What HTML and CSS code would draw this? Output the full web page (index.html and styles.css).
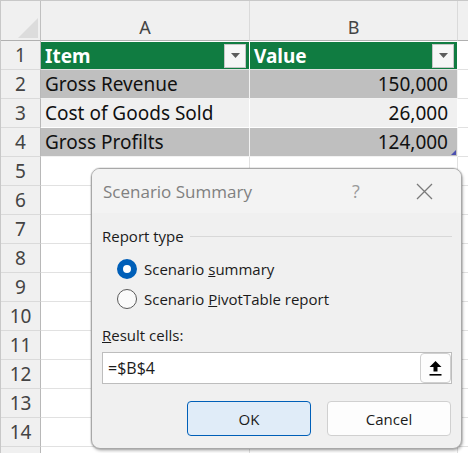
FILE: index.html
```html
<!DOCTYPE html>
<html>
<head>
<meta charset="utf-8">
<link rel="stylesheet" href="styles.css">
</head>
<body>
<div class="sheet">
  <div class="corner"><span class="tri"></span></div>
  <div class="colhead">A</div>
  <div class="colhead">B</div>
  <div class="colhead tail"></div>

  <div class="rowhead">1</div>
  <div class="cell hdr">Item<span class="filter"><svg width="9" height="5" viewBox="0 0 9 5"><path d="M0 0h9L4.5 5z" fill="#5c5c5c"/></svg></span></div>
  <div class="cell hdr">Value<span class="filter"><svg width="9" height="5" viewBox="0 0 9 5"><path d="M0 0h9L4.5 5z" fill="#5c5c5c"/></svg></span></div>
  <div class="cell tail"></div>

  <div class="rowhead">2</div>
  <div class="cell dark">Gross Revenue</div>
  <div class="cell dark num">150,000</div>
  <div class="cell tail"></div>

  <div class="rowhead">3</div>
  <div class="cell light">Cost of Goods Sold</div>
  <div class="cell light num">26,000</div>
  <div class="cell tail"></div>

  <div class="rowhead">4</div>
  <div class="cell dark">Gross Profilts</div>
  <div class="cell dark num">124,000<span class="handle"></span></div>
  <div class="cell tail"></div>

  <div class="rowhead">5</div><div class="cell"></div><div class="cell"></div><div class="cell tail"></div>
  <div class="rowhead">6</div><div class="cell"></div><div class="cell"></div><div class="cell tail"></div>
  <div class="rowhead">7</div><div class="cell"></div><div class="cell"></div><div class="cell tail"></div>
  <div class="rowhead">8</div><div class="cell"></div><div class="cell"></div><div class="cell tail"></div>
  <div class="rowhead">9</div><div class="cell"></div><div class="cell"></div><div class="cell tail"></div>
  <div class="rowhead">10</div><div class="cell"></div><div class="cell"></div><div class="cell tail"></div>
  <div class="rowhead">11</div><div class="cell"></div><div class="cell"></div><div class="cell tail"></div>
  <div class="rowhead">12</div><div class="cell"></div><div class="cell"></div><div class="cell tail"></div>
  <div class="rowhead">13</div><div class="cell"></div><div class="cell"></div><div class="cell tail"></div>
  <div class="rowhead">14</div><div class="cell"></div><div class="cell"></div><div class="cell tail"></div>
  <div class="rowhead"></div><div class="cell"></div><div class="cell"></div><div class="cell tail"></div>
</div>

<div class="dialog">
  <div class="titlebar">
    <span class="title">Scenario Summary</span>
    <span class="help">?</span>
    <span class="close"><svg width="17" height="17" viewBox="0 0 17 17"><path d="M1 1L16 16M16 1L1 16" stroke="#7a7a7a" stroke-width="1.3"/></svg></span>
  </div>
  <div class="body">
    <div class="group"><span>Report type</span><span class="rule"></span></div>
    <div class="radio"><span class="dot on"></span><span>Scenario <u>s</u>ummary</span></div>
    <div class="radio"><span class="dot"></span><span>Scenario <u>P</u>ivotTable report</span></div>
    <div class="label"><u>R</u>esult cells:</div>
    <div class="input">
      <span class="value">=$B$4</span>
      <span class="collapse"><svg width="13" height="15" viewBox="0 0 13 15"><path d="M6.5 0L12.5 6H8.5V10.5H4.5V6H0.5Z" fill="#000"/><rect x="0.5" y="13" width="12" height="1.6" fill="#000"/></svg></span>
    </div>
    <div class="buttons">
      <span class="btn ok">OK</span>
      <span class="btn">Cancel</span>
    </div>
  </div>
</div>
</body>
</html>
```

FILE: styles.css
```css
html, body {
  margin: 0;
  padding: 0;
}
body {
  width: 468px;
  height: 453px;
  overflow: hidden;
  position: relative;
  background: #ffffff;
  font-family: "Open Sans", "Noto Sans", sans-serif;
}
.sheet {
  display: grid;
  grid-template-columns: 40px 209px 208px 11px;
  grid-template-rows: 40px;
  grid-auto-rows: 29px;
  border-top: 1px solid #c8c8c8;
  border-left: 1px solid #c8c8c8;
  box-sizing: border-box;
  height: 453px;
  overflow: hidden;
}
.sheet > div {
  box-sizing: border-box;
  border-right: 1px solid #e1e1e1;
  border-bottom: 1px solid #e1e1e1;
}
.corner {
  background: #f0f0f0;
  border-right: 1px solid #c0c0c0 !important;
  border-bottom: 1px solid #b0b0b0 !important;
  position: relative;
}
.tri {
  position: absolute;
  right: 2px;
  bottom: 2px;
  width: 0;
  height: 0;
  border-left: 20px solid transparent;
  border-bottom: 20px solid #dcdcdc;
}
.colhead {
  background: #f0f0f0;
  border-right: 1px solid #dadada !important;
  border-bottom: 1px solid #b0b0b0 !important;
  color: #444;
  font-family: "Noto Sans", sans-serif;
  font-size: 18px;
  text-align: center;
  padding-top: 14px;
  line-height: 24px;
}
.colhead.tail {
  border-right: none !important;
}
.rowhead {
  background: #f0f0f0;
  border-right: 1px solid #b8b8b8 !important;
  border-bottom: 1px solid #dadada !important;
  color: #444;
  font-family: "Noto Sans", sans-serif;
  font-size: 19px;
  text-align: center;
  line-height: 28px;
}
.cell {
  font-family: "Noto Sans", sans-serif;
  font-size: 19px;
  line-height: 28px;
  color: #111;
  padding: 0 4px;
  white-space: nowrap;
  position: relative;
}
.cell.tail {
  background: #ffffff;
  border-right: none !important;
}
.cell.hdr {
  background: #107c41;
  color: #ffffff;
  font-weight: bold;
  border-right: 1px solid #ffffff;
  border-top: 1px solid #ffffff;
  line-height: 26px;
  display: flex;
  align-items: center;
  justify-content: space-between;
  padding-right: 3px;
}
.filter {
  width: 22px;
  height: 24px;
  box-sizing: border-box;
  background: #f6f6f6;
  border: 1px solid #c6c6c6;
  display: flex;
  align-items: center;
  justify-content: center;
}
.cell.dark {
  background: #bfbfbf;
  border-right: 1px solid #f2f2f2;
  border-bottom: 1px solid #f2f2f2;
}
.cell.light {
  background: #f0f0f0;
  border-right: 1px solid #ffffff;
  border-bottom: 1px solid #ffffff;
}
.cell.num {
  text-align: right;
  padding-right: 9px;
}
.handle {
  position: absolute;
  right: 1px;
  bottom: 1px;
  width: 0;
  height: 0;
  border-left: 5px solid transparent;
  border-bottom: 5px solid #4b4fb0;
}

/* dialog */
.dialog {
  position: absolute;
  left: 91px;
  top: 168px;
  width: 371px;
  height: 281px;
  box-sizing: border-box;
  background: #f0f0f0;
  border: 1px solid #a8a8a8;
  border-radius: 9px;
  box-shadow: 0 0 0 1px rgba(0,0,0,0.08), 1px 2px 3px rgba(0,0,0,0.25);
  font-family: "Open Sans", "Noto Sans", sans-serif;
  color: #1b1b1b;
  overflow: hidden;
}
.titlebar {
  height: 44px;
  background: #f3f3f3;
  display: flex;
  align-items: center;
  padding-left: 11px;
}
.title {
  font-size: 17px;
  color: #808080;
  flex: 1;
}
.help {
  font-size: 18px;
  color: #9a9a9a;
  width: 20px;
  text-align: center;
  margin-right: 50px;
}
.close {
  display: flex;
  margin-right: 28px;
}
.body {
  padding: 0 9px 0 10px;
  font-size: 15px;
}
.group {
  display: flex;
  align-items: center;
  margin-top: 12px;
  height: 22px;
}
.rule {
  flex: 1;
  height: 1px;
  background: #d8d8d8;
  margin-left: 6px;
}
.radio {
  display: flex;
  align-items: center;
  height: 30px;
  padding-left: 15px;
}
.group + .radio {
  margin-top: 7px;
}
.dot {
  width: 20px;
  height: 20px;
  box-sizing: border-box;
  border-radius: 50%;
  border: 1px solid #5a5a5a;
  background: #fafafa;
  margin-right: 7px;
}
.dot.on {
  border: 6px solid #005fb8;
  background: #ffffff;
}
.label {
  margin-top: 10px;
  height: 22px;
  line-height: 22px;
}
.input {
  margin-top: 6px;
  height: 32px;
  box-sizing: border-box;
  background: #ffffff;
  border: 1px solid #bdbdbd;
  display: flex;
  align-items: center;
  justify-content: space-between;
  padding-left: 5px;
  font-size: 16px;
}
.collapse {
  width: 31px;
  height: 30px;
  box-sizing: border-box;
  border: 1px solid #d0d0d0;
  border-radius: 4px;
  background: #fdfdfd;
  display: flex;
  align-items: center;
  justify-content: center;
}
.buttons {
  display: flex;
  justify-content: flex-end;
  gap: 16px;
  margin-top: 17px;
  padding-right: 1px;
}
.btn {
  width: 124px;
  height: 35px;
  box-sizing: border-box;
  border: 1px solid #d0d0d0;
  border-radius: 4px;
  background: #fdfdfd;
  display: flex;
  align-items: center;
  justify-content: center;
  font-size: 15px;
}
.btn.ok {
  background: #e0ecf8;
  border-color: #005fb8;
}
```
